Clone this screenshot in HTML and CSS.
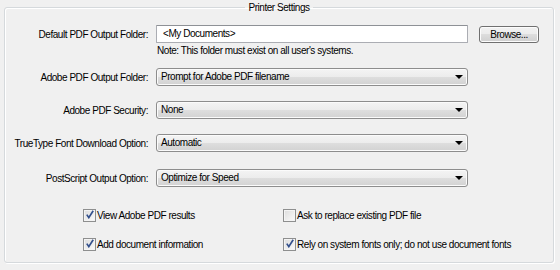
FILE: index.html
```html
<!DOCTYPE html>
<html>
<head>
<meta charset="utf-8">
<link rel="stylesheet" href="styles.css">
</head>
<body>
<fieldset class="group">
  <legend class="group-title">Printer Settings</legend>
  <div class="form">
    <label class="lbl">Default PDF Output Folder:</label>
    <div class="textbox">&lt;My Documents&gt;</div>
    <button class="btn">Browse...</button>

    <div class="note">Note: This folder must exist on all user's systems.</div>

    <label class="lbl r-sel1">Adobe PDF Output Folder:</label>
    <div class="select r-sel1">Prompt for Adobe PDF filename</div>

    <label class="lbl r-sel2">Adobe PDF Security:</label>
    <div class="select r-sel2">None</div>

    <label class="lbl r-sel3">TrueType Font Download Option:</label>
    <div class="select r-sel3">Automatic</div>

    <label class="lbl r-sel4">PostScript Output Option:</label>
    <div class="select r-sel4">Optimize for Speed</div>
  </div>
  <div class="checks">
    <div class="check on">View Adobe PDF results</div>
    <div class="check">Ask to replace existing PDF file</div>
    <div class="check on">Add document information</div>
    <div class="check on">Rely on system fonts only; do not use document fonts</div>
  </div>
</fieldset>
</body>
</html>
```

FILE: styles.css
```css
html, body {
  margin: 0;
  padding: 0;
  background: #f0f0f0;
}
body {
  width: 560px;
  height: 270px;
  overflow: hidden;
  font-family: "Liberation Sans", Arial, sans-serif;
  font-size: 10px;
  letter-spacing: -0.45px;
  line-height: 13px;
  color: #000;
  white-space: nowrap;
}
.group {
  margin: 1px 6px 0 4px;
  padding: 11px 0 11px 0;
  border: 1px solid #d5d9dc;
  border-radius: 3px;
  box-shadow: inset 1px 1px 0 #fff, 1px 1px 0 #fff;
  min-inline-size: 0;
}
.group-title {
  margin: 0 auto;
  padding: 0 3px;
  line-height: 13px;
}
.form {
  display: grid;
  grid-template-columns: 143px 312px 60px;
  column-gap: 8px;
  align-items: center;
}
.lbl {
  grid-column: 1;
  text-align: right;
}
.textbox {
  height: 16px;
  line-height: 16px;
  padding: 0 6px;
  background: #fff;
  border: 1px solid #abadb3;
  border-top-color: #8e9196;
  border-radius: 1px;
}
.btn {
  margin-left: 3px;
  width: 60px;
  height: 17px;
  padding: 0;
  font: inherit;
  letter-spacing: inherit;
  color: #000;
  border: 1px solid #707070;
  border-radius: 3px;
  background: linear-gradient(#f2f2f2 0%, #ebebeb 50%, #dddddd 50%, #cfcfcf 100%);
  box-shadow: inset 0 0 0 1px #fcfcfc;
}
.note {
  grid-column: 2 / 4;
  margin-top: 1px;
  padding-left: 1px;
}
.select {
  position: relative;
  grid-column: 2;
  height: 16px;
  line-height: 16px;
  padding: 0 20px 0 4px;
  border: 1px solid #8d8d8d;
  border-radius: 3px;
  background: linear-gradient(#f4f4f4 0%, #ececec 50%, #dedede 50%, #d2d2d2 100%);
  box-shadow: inset 0 0 0 1px #fbfbfb;
}
.select::after {
  content: "";
  position: absolute;
  right: 4px;
  top: 6px;
  border-left: 4px solid transparent;
  border-right: 4px solid transparent;
  border-top: 4px solid #000;
}
.r-sel1 { margin-top: 11px; }
.r-sel2 { margin-top: 15px; }
.r-sel3 { margin-top: 15px; }
.r-sel4 { margin-top: 17px; }

.checks {
  display: grid;
  grid-template-columns: 200px 1fr;
  row-gap: 16px;
  margin-top: 22px;
  padding-left: 78px;
}
.check {
  position: relative;
  padding-left: 14px;
  line-height: 13px;
}
.check::before {
  content: "";
  position: absolute;
  left: 0;
  top: 0;
  width: 11px;
  height: 11px;
  border: 1px solid #8e8f8f;
  background: linear-gradient(135deg, #dcdcdc, #fbfbfb);
  box-shadow: inset 0 0 0 1px #f4f4f4;
}
.check.on::after {
  content: "";
  position: absolute;
  left: 3px;
  top: 1px;
  width: 8px;
  height: 9px;
  background: url("data:image/svg+xml;utf8,<svg xmlns='http://www.w3.org/2000/svg' width='8' height='9' viewBox='0 0 8 9'><path d='M0.8 4.6 L2.8 7.6 L7.2 0.8' fill='none' stroke='%23324f8c' stroke-width='1.7'/></svg>") no-repeat;
}
```
